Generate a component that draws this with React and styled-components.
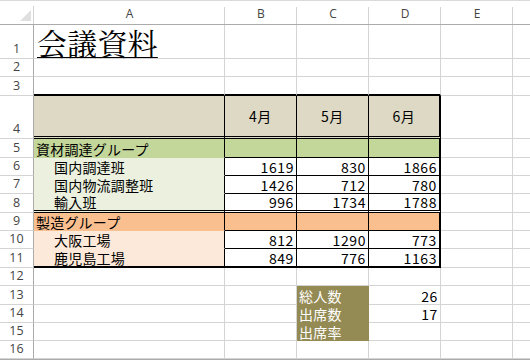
import React from "react";
import styled, { createGlobalStyle } from "styled-components";

const GRID = "#d4d4d4";
const HEAD_LINE = "#ababab";
const TAN = "#ddd9c4";
const GREEN = "#c4d79b";
const LIGHT_GREEN = "#ebf1de";
const ORANGE = "#fabf8f";
const LIGHT_ORANGE = "#fde9d9";
const OLIVE = "#948a54";

const thin = "1px solid #000";
const thick = "2px solid #000";
const dbl = "3px double #000";

const LETTERS = ["A", "B", "C", "D", "E", ""];

const monthCell = (text, last) => ({
  text,
  bg: TAN,
  align: "center",
  valign: "center",
  spaced: true,
  br: last ? thick : thin,
  bb: dbl,
});

const groupRow = (label, bg) => [
  { text: label, bg, br: thin, bb: `1px solid ${bg}` },
  { bg, br: thin, bb: thin },
  { bg, br: thin, bb: thin },
  { bg, br: thick, bb: thin },
];

const numRow = (label, nums, bg, bottom) => [
  {
    text: label,
    bg,
    indent: true,
    br: thin,
    bb: bottom || `1px solid ${bg}`,
  },
  ...nums.map((n, i) => ({
    text: n,
    align: "right",
    spaced: true,
    br: i === 2 ? thick : thin,
    bb: bottom || thin,
  })),
];

const oliveRow = (label, value) => [
  {},
  {},
  {
    text: label,
    bg: OLIVE,
    color: "#fff",
    br: `1px solid ${OLIVE}`,
    bb: `1px solid ${OLIVE}`,
  },
  { text: value, align: "right", spaced: true },
];

const rows = [
  { h: 34, cells: [{ title: "会議資料" }] },
  { h: 18, cells: [] },
  { h: 19, cells: [{ bb: thick }, { bb: thick }, { bb: thick }, { bb: thick }] },
  {
    h: 43,
    cells: [
      { bg: TAN, br: thin, bb: dbl },
      monthCell("4月"),
      monthCell("5月"),
      monthCell("6月", true),
    ],
  },
  { h: 19, cells: groupRow("資材調達グループ", GREEN) },
  { h: 18, cells: numRow("国内調達班", ["1619", "830", "1866"], LIGHT_GREEN) },
  { h: 18, cells: numRow("国内物流調整班", ["1426", "712", "780"], LIGHT_GREEN) },
  { h: 19, cells: numRow("輸入班", ["996", "1734", "1788"], LIGHT_GREEN, dbl) },
  { h: 18, cells: groupRow("製造グループ", ORANGE) },
  { h: 18, cells: numRow("大阪工場", ["812", "1290", "773"], LIGHT_ORANGE) },
  { h: 19, cells: numRow("鹿児島工場", ["849", "776", "1163"], LIGHT_ORANGE, thick) },
  { h: 18, cells: [] },
  { h: 19, cells: oliveRow("総人数", "26") },
  { h: 18, cells: oliveRow("出席数", "17") },
  { h: 18, cells: oliveRow("出席率", "") },
  { h: 18, cells: [] },
];

const GlobalStyle = createGlobalStyle`
  body {
    margin: 0;
    background: #fff;
  }
  #root {
    width: 530px;
    height: 360px;
    overflow: hidden;
  }
`;

const Sheet = styled.div`
  display: grid;
  grid-template-columns: 34px 191px 72px 72px 72px 72px 1fr;
  grid-template-rows: ${(p) => p.$rows};
  width: 530px;
  height: 360px;
  box-sizing: border-box;
  border-top: 1px solid #dadada;
  border-bottom: 1px solid ${HEAD_LINE};
  background: #fff;
  overflow: hidden;
`;

const Corner = styled.div`
  position: relative;
  display: flex;
  align-items: flex-end;
  justify-content: flex-end;
  padding: 0 2px 2px 0;
  border-bottom: 1px solid ${HEAD_LINE};
  &::after {
    content: "";
    position: absolute;
    right: 0;
    top: 5px;
    bottom: 0;
    width: 1px;
    background: ${GRID};
  }
`;

const ColHead = styled.div`
  position: relative;
  display: flex;
  justify-content: center;
  padding-top: 5px;
  border-bottom: 1px solid ${HEAD_LINE};
  font-family: "Open Sans", "Liberation Sans", sans-serif;
  font-size: 12px;
  line-height: 16px;
  color: #444;
  &::after {
    content: "";
    display: ${(p) => (p.$last ? "none" : "block")};
    position: absolute;
    right: 0;
    top: 6px;
    bottom: 0;
    width: 1px;
    background: ${GRID};
  }
`;

const RowHead = styled.div`
  display: flex;
  align-items: flex-end;
  justify-content: center;
  padding-bottom: 1px;
  box-sizing: border-box;
  border-right: 1px solid ${HEAD_LINE};
  border-bottom: 1px solid ${GRID};
  font-family: "Open Sans", "Liberation Sans", sans-serif;
  font-size: 12.5px;
  line-height: 16px;
  color: #444;
`;

const Cell = styled.div`
  box-sizing: border-box;
  display: flex;
  min-width: 0;
  align-items: ${(p) => (p.$valign === "center" ? "center" : "flex-end")};
  justify-content: ${(p) =>
    p.$align === "right"
      ? "flex-end"
      : p.$align === "center"
      ? "center"
      : "flex-start"};
  padding: 0 2px 0 ${(p) => (p.$indent ? "20px" : "2px")};
  background: ${(p) => p.$bg || "#fff"};
  color: ${(p) => p.$color || "#000"};
  border-right: ${(p) => p.$br || `1px solid ${GRID}`};
  border-bottom: ${(p) => p.$bb || `1px solid ${GRID}`};
  font-family: "Noto Sans CJK JP", sans-serif;
  font-size: 14px;
  line-height: 16px;
  letter-spacing: ${(p) => (p.$spaced ? "0.6px" : "0.2px")};
  white-space: nowrap;
`;

const Title = styled.span`
  padding-left: 1px;
  font-family: "Noto Serif CJK JP", "Noto Sans CJK JP", serif;
  font-size: 30px;
  line-height: 32px;
  text-decoration: underline;
  text-decoration-thickness: 1px;
  text-underline-offset: 2px;
`;

const App = () => {
  const template = ["24px", ...rows.map((r) => `${r.h}px`)].join(" ");
  return (
    <>
      <GlobalStyle />
      <Sheet $rows={template}>
        <Corner>
          <svg width="12" height="12" viewBox="0 0 12 12">
            <polygon points="11,0 11,11 0,11" fill="#dfdfdf" />
          </svg>
        </Corner>
        {LETTERS.map((l, i) => (
          <ColHead key={i} $last={i === LETTERS.length - 1}>
            {l}
          </ColHead>
        ))}
        {rows.map((row, r) => (
          <React.Fragment key={r}>
            <RowHead>{r + 1}</RowHead>
            {LETTERS.map((_, c) => {
              const cell = row.cells[c] || {};
              return (
                <Cell
                  key={c}
                  $bg={cell.bg}
                  $color={cell.color}
                  $align={cell.align}
                  $valign={cell.valign}
                  $indent={cell.indent}
                  $spaced={cell.spaced}
                  $br={c === LETTERS.length - 1 ? "none" : cell.br}
                  $bb={cell.bb}
                >
                  {cell.title ? <Title>{cell.title}</Title> : cell.text}
                </Cell>
              );
            })}
          </React.Fragment>
        ))}
      </Sheet>
    </>
  );
};

export default App;
